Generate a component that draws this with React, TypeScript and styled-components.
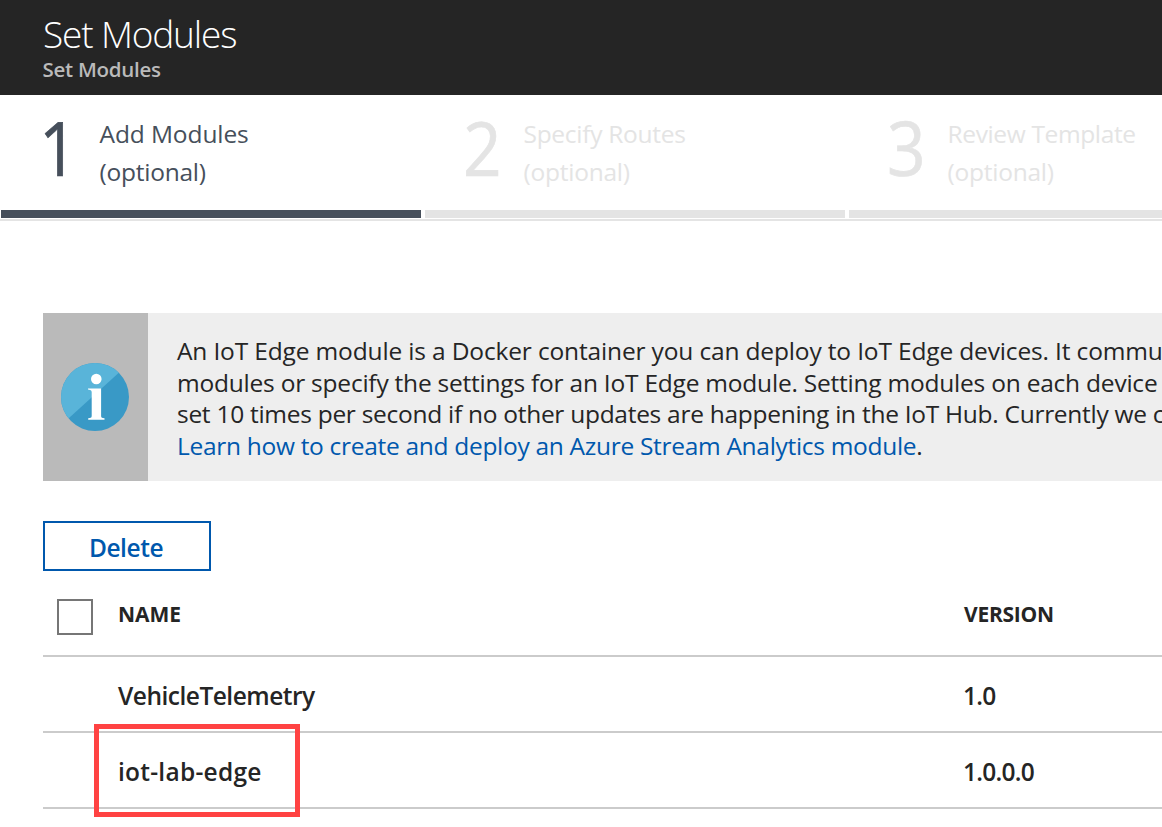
import React from 'react';
import styled, { createGlobalStyle } from 'styled-components';

const GlobalStyle = createGlobalStyle`
  * { box-sizing: border-box; }
  body {
    margin: 0;
    background: #fff;
    color: #252525;
    font-family: 'Open Sans', 'Noto Sans', sans-serif;
    overflow: hidden;
  }
`;

const Page = styled.div`
  width: 100vw;
  height: 100vh;
  overflow: hidden;
  font-size: 24.5px;
`;

const Header = styled.header`
  height: 95px;
  padding: 14px 42px 0;
  background: #252525;
`;

const Title = styled.h1`
  margin: 0 0 3px 1px;
  font-size: 37px;
  font-weight: 300;
  line-height: 40px;
  letter-spacing: -1.15px;
  color: #fff;
`;

const Subtitle = styled.div`
  padding-left: 0.5px;
  font-size: 20.5px;
  font-weight: 600;
  line-height: 24px;
  letter-spacing: -0.28px;
  color: #bababa;
`;

const Steps = styled.nav`
  display: flex;
  gap: 4px;
  height: 126px;
  padding-left: 1px;
  border-bottom: 2px solid #e4e4e4;
`;

const Step = styled.div<{ $active?: boolean }>`
  display: flex;
  flex: none;
  width: 420px;
  height: 123px;
  padding: 14px 0 0 38px;
  color: ${(p) => (p.$active ? '#464f5b' : '#e4e4e4')};
  border-bottom: 8px solid ${(p) => (p.$active ? '#464f5b' : '#e4e4e4')};
`;

const StepNumber = styled.span`
  width: 60.5px;
  font-size: 75px;
  line-height: 76px;
  -webkit-text-stroke: 0.7px currentColor;
  transform: scaleX(0.9);
  transform-origin: left;
`;

const StepLabel = styled.div`
  padding-top: 6px;
  line-height: 38px;
`;

const Tracked = styled.div<{ $ls: number }>`
  letter-spacing: ${(p) => p.$ls}px;
  white-space: nowrap;
`;

const Content = styled.main`
  padding: 92px 0 0 43px;
`;

const Notice = styled.section`
  display: flex;
  height: 168px;
  background: #eee;
`;

const NoticeIcon = styled.div`
  display: flex;
  flex: none;
  align-items: center;
  justify-content: center;
  width: 105px;
  padding-right: 1px;
  background: #bababa;
`;

const NoticeText = styled.div`
  padding: 22px 0 0 29px;
  line-height: 31.67px;
`;

const Link = styled.a`
  color: #0058ad;
`;

const DeleteButton = styled.button`
  display: block;
  width: 168px;
  height: 50px;
  margin-top: 40px;
  padding: 3px 2px 0 0;
  border: 2px solid #0058ad;
  background: #fff;
  color: #0058ad;
  font: 600 24.5px 'Open Sans', sans-serif;
  letter-spacing: -0.45px;
`;

const Row = styled.div<{ $head?: boolean }>`
  display: grid;
  grid-template-columns: 75px 844px 1fr;
  align-items: center;
  height: ${(p) => (p.$head ? 86 : 76)}px;
  padding-top: ${(p) => (p.$head ? 6 : 2)}px;
  border-bottom: 2px solid #cbcbcb;
  font-weight: 600;
`;

const Checkbox = styled.span`
  width: 36px;
  height: 36px;
  margin: 2px 0 0 14px;
  border: 2px solid #767676;
  background: #fff;
`;

const HeadCell = styled(Tracked)<{ $indent?: number }>`
  padding: 0 0 5px ${(p) => p.$indent ?? 0}px;
  font-size: 21px;
  font-weight: 700;
`;

const Cell = styled(Tracked)<{ $indent?: number }>`
  position: relative;
  padding-left: ${(p) => p.$indent ?? 0}px;
`;

const Highlight = styled.span`
  position: absolute;
  left: -24px;
  top: 50%;
  width: 206px;
  height: 93px;
  margin-top: -47px;
  border: 5px solid #ff4242;
`;

const InfoIcon = () => (
  <svg width="68" height="68" viewBox="0 0 68 68">
    <clipPath id="disc">
      <circle cx="34" cy="34" r="34" />
    </clipPath>
    <circle cx="34" cy="34" r="34" fill="#3999c6" />
    <path d="M-2.7 64.6 L68.5 0 H-3 Z" fill="#59b4d9" clipPath="url(#disc)" />
    <circle cx="35.3" cy="16" r="5.3" fill="#fff" />
    <path
      d="M27 25.4h13.1v27.8q0 1.7 1.7 1.9l1.7.2v1.5H27.2v-1.5l1.7-.2q1.8-.2 1.8-1.9V29q0-1.7-1.5-2l-2.2-.4z"
      fill="#fff"
    />
  </svg>
);

const steps = [
  { label: 'Add Modules', ls: -0.1, active: true },
  { label: 'Specify Routes', ls: -0.28 },
  { label: 'Review Template', ls: -0.36 },
];

const modules = [
  { name: 'VehicleTelemetry', ls: -0.5, version: '1.0' },
  { name: 'iot-lab-edge', ls: 0.25, version: '1.0.0.0', highlighted: true },
];

export default function App() {
  return (
    <Page>
      <GlobalStyle />
      <Header>
        <Title>Set Modules</Title>
        <Subtitle>Set Modules</Subtitle>
      </Header>
      <Steps>
        {steps.map((s, i) => (
          <Step key={s.label} $active={s.active}>
            <StepNumber>{i + 1}</StepNumber>
            <StepLabel>
              <Tracked $ls={s.ls}>{s.label}</Tracked>
              <Tracked $ls={-0.24}>(optional)</Tracked>
            </StepLabel>
          </Step>
        ))}
      </Steps>
      <Content>
        <Notice>
          <NoticeIcon>
            <InfoIcon />
          </NoticeIcon>
          <NoticeText>
            <Tracked $ls={-0.15}>
              An IoT Edge module is a Docker container you can deploy to IoT Edge devices. It commu
            </Tracked>
            <Tracked $ls={-0.22}>
              modules or specify the settings for an IoT Edge module. Setting modules on each device
            </Tracked>
            <Tracked $ls={-0.28}>
              set 10 times per second if no other updates are happening in the IoT Hub. Currently we c
            </Tracked>
            <Tracked $ls={-0.3}>
              <Link>Learn how to create and deploy an Azure Stream Analytics module</Link>.
            </Tracked>
          </NoticeText>
        </Notice>
        <DeleteButton>Delete</DeleteButton>
        <Row $head>
          <Checkbox />
          <HeadCell $ls={0}>NAME</HeadCell>
          <HeadCell $ls={-0.25} $indent={2}>VERSION</HeadCell>
        </Row>
        {modules.map((m) => (
          <Row key={m.name}>
            <span />
            <Cell $ls={m.ls}>
              {m.name}
              {m.highlighted && <Highlight />}
            </Cell>
            <Cell $ls={-0.75} $indent={1}>{m.version}</Cell>
          </Row>
        ))}
      </Content>
    </Page>
  );
}
